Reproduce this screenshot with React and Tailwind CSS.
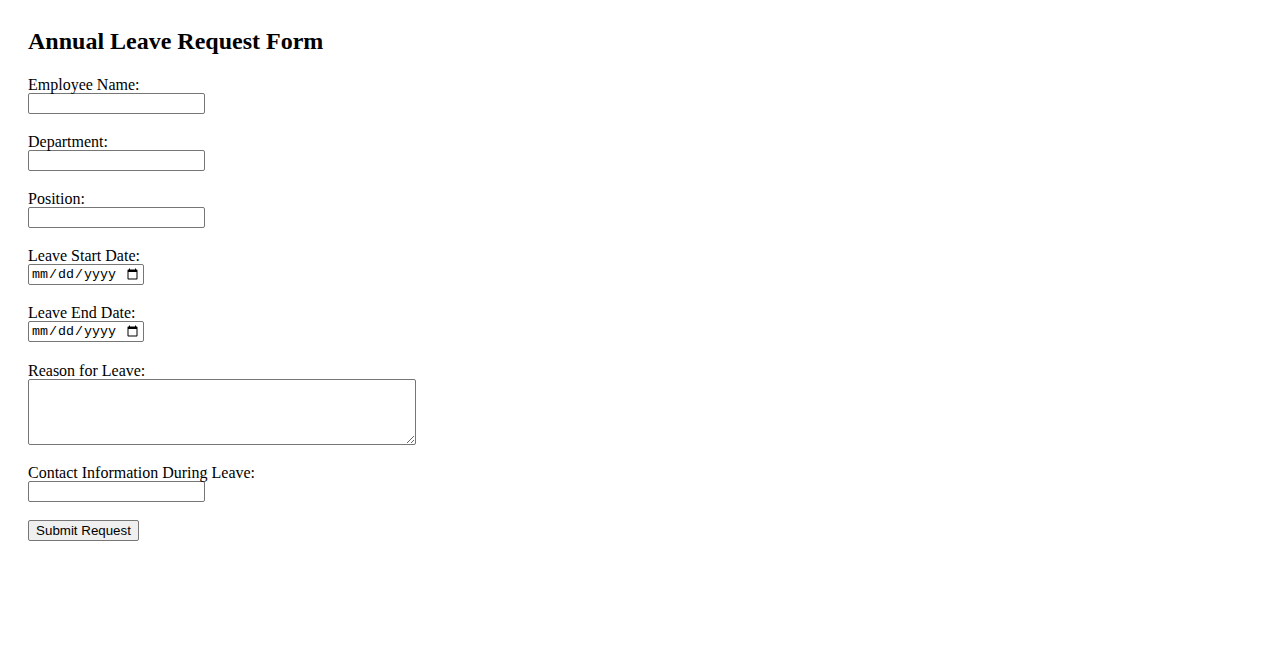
import React from "react";

const serif = "font-['Liberation_Serif','Times_New_Roman',serif]";
const inputCls =
  "block w-[177px] h-[21px] border border-[#767676] rounded-[2px] bg-white px-[2px] py-[1px] text-[13.33px] font-['Liberation_Sans',Arial,sans-serif] text-black";
const dateCls =
  "block w-[116px] h-[21px] border border-[#767676] rounded-[2px] bg-white pl-[2px] pr-[2px] py-0 text-[13.33px] font-['Liberation_Mono','Courier_New',monospace] text-black";

function Field({ label, children, mb = "mb-[17.6px]" }) {
  return (
    <div className={mb}>
      <label className="block text-[16px] leading-[16.4px] pt-[2px]">{label}</label>
      {children}
    </div>
  );
}

export default function App() {
  return (
    <div className={`${serif} bg-white text-black min-h-[650px] pl-[28px] pt-[28px]`}>
      <h2 className="text-[24px] font-bold leading-[27.6px] m-0 mb-[19.2px]">
        Annual Leave Request Form
      </h2>
      <form onSubmit={(e) => e.preventDefault()}>
        <Field label="Employee Name:">
          <input type="text" className={inputCls} />
        </Field>
        <Field label="Department:">
          <input type="text" className={inputCls} />
        </Field>
        <Field label="Position:">
          <input type="text" className={inputCls} />
        </Field>
        <Field label="Leave Start Date:">
          <input type="date" className={dateCls} />
        </Field>
        <Field label="Leave End Date:" mb="mb-[18.4px]">
          <input type="date" className={dateCls} />
        </Field>
        <Field label="Reason for Leave:">
          <textarea className="block w-[388px] h-[66px] border border-[#767676] rounded-[2px] bg-white p-[2px] text-[13.33px] font-['Liberation_Mono',monospace] resize" />
        </Field>
        <Field label="Contact Information During Leave:">
          <input type="text" className={inputCls} />
        </Field>
        <button
          type="submit"
          className="block w-[111px] h-[21px] border border-[#767676] rounded-[2px] bg-[#efefef] px-[6px] py-[1px] text-[13.33px] leading-[15px] font-['Liberation_Sans',Arial,sans-serif] text-black text-center"
        >
          Submit Request
        </button>
      </form>
    </div>
  );
}
